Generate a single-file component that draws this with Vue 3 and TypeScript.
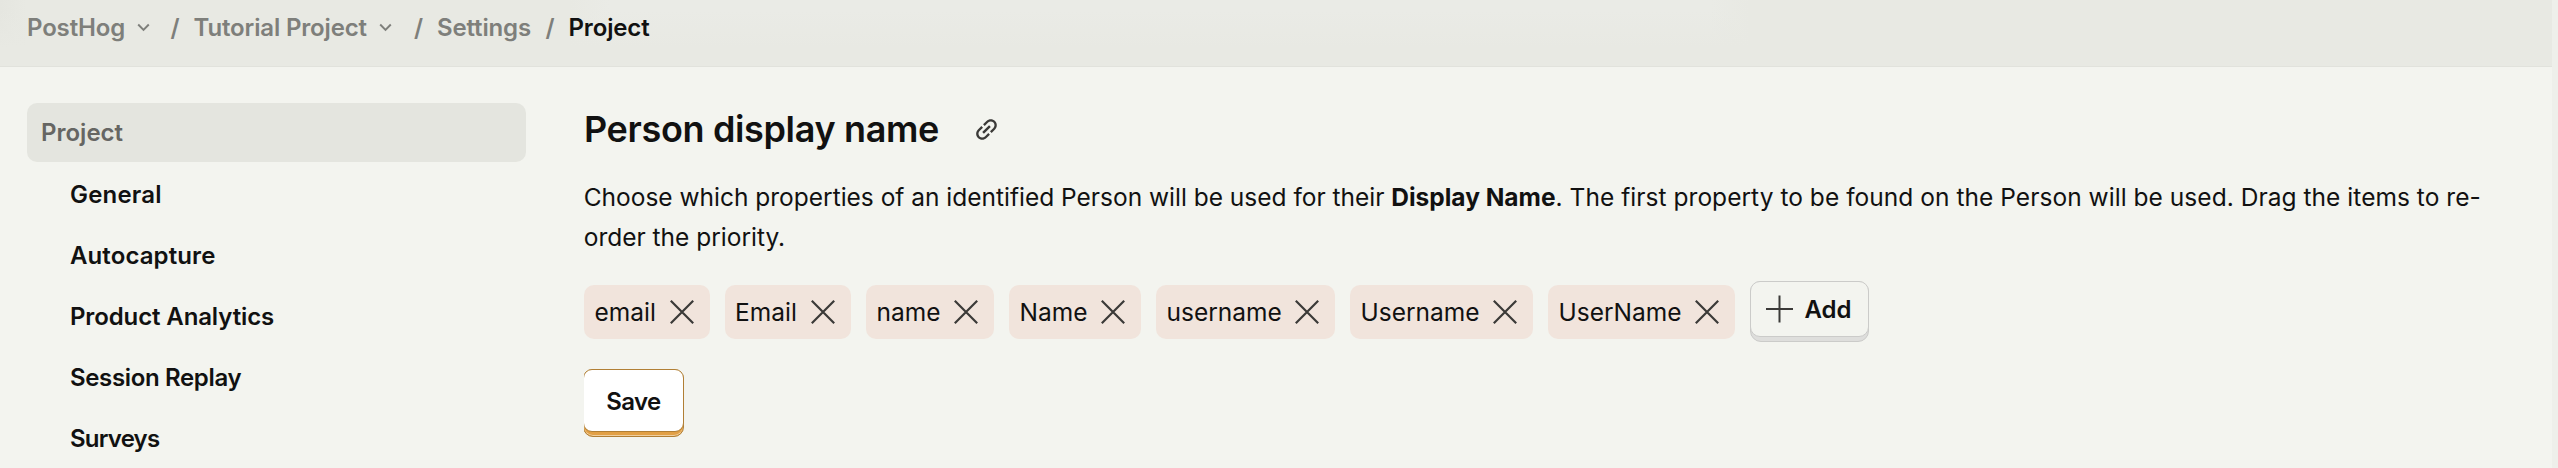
<script setup lang="ts">
interface Crumb { label: string; menu?: boolean; slot: number }
interface NavItem { label: string; tracking: number }
interface Tag { label: string; width: number }

const crumbs: Crumb[] = [
  { label: 'PostHog', menu: true, slot: 143.5 },
  { label: 'Tutorial Project', menu: true, slot: 220.5 },
  { label: 'Settings', slot: 108.5 },
]

const sections: NavItem[] = [
  { label: 'General', tracking: 0.2 },
  { label: 'Autocapture', tracking: 0.1 },
  { label: 'Product Analytics', tracking: -0.12 },
  { label: 'Session Replay', tracking: -0.35 },
  { label: 'Surveys', tracking: -0.8 },
]

const tags: Tag[] = [
  { label: 'email', width: 125.5 },
  { label: 'Email', width: 126.5 },
  { label: 'name', width: 128 },
  { label: 'Name', width: 132 },
  { label: 'username', width: 179 },
  { label: 'Username', width: 183 },
  { label: 'UserName', width: 186.5 },
]
</script>

<template>
  <div class="page">
    <div class="view">
      <header class="topbar">
        <nav class="crumbs">
          <template v-for="c in crumbs" :key="c.label">
            <span class="crumb" :style="{ width: c.slot + 'px' }">
              {{ c.label }}
              <svg v-if="c.menu" class="chevron" width="13" height="9" viewBox="0 0 13 9">
                <path d="M1.2 1.5 6.5 7l5.300-5.500" />
              </svg>
            </span>
            <span class="slash">/</span>
          </template>
          <span class="crumb current">Project</span>
        </nav>
      </header>

      <div class="body">
        <aside class="sidebar">
          <a class="nav-top">Project</a>
          <a
            v-for="s in sections"
            :key="s.label"
            class="nav-item"
            :style="{ letterSpacing: s.tracking + 'px' }"
          >{{ s.label }}</a>
        </aside>

        <main class="content">
          <h2 class="title">
            <span>Person display name</span>
            <svg class="link" width="29" height="29" viewBox="0 0 24 24">
              <path
                transform="rotate(-45 12 12)"
                d="M3.900 12c0-1.710 1.390-3.100 3.100-3.100h4V7H7c-2.760 0-5 2.240-5 5s2.240 5 5 5h4v-1.900H7c-1.710 0-3.100-1.390-3.100-3.100zM8 13h8v-2H8v2zm9-6h-4v1.900h4c1.710 0 3.100 1.390 3.100 3.100s-1.390 3.100-3.100 3.100h-4V17h4c2.760 0 5-2.240 5-5s-2.240-5-5-5z"
              />
            </svg>
          </h2>
          <p class="desc">
            Choose which properties of an identified Person will be used for their
            <strong>Display Name</strong><span class="rest">. The first property to be found on the Person will be used. Drag the items to re-</span><br />order the priority.
          </p>
          <div class="tags">
            <span v-for="t in tags" :key="t.label" class="tag" :style="{ width: t.width + 'px' }">
              {{ t.label }}
              <svg width="24" height="24" viewBox="0 0 24 24">
                <path d="M.8.8l22.400 22.400M23.200.8.8 23.200" />
              </svg>
            </span>
            <button class="add">
              <span class="face">
                <svg width="27" height="28" viewBox="0 0 27 28">
                  <path d="M0 14h27M13.500 .5v27" />
                </svg>
                Add
              </span>
            </button>
          </div>
          <div class="actions">
            <button class="save"><span class="face">Save</span></button>
          </div>
        </main>
      </div>
    </div>
    <div class="gutter"></div>
  </div>
</template>

<style>
body {
  margin: 0;
  overflow: hidden;
  background: #f3f4ef;
}
</style>

<style scoped>
* {
  box-sizing: border-box;
}
.page {
  display: flex;
  width: 2558px;
  height: 468px;
  overflow: hidden;
  background: #f3f4ef;
  color: #111;
  font-family: Inter, 'Liberation Sans', sans-serif;
  font-size: 24px;
}
.view {
  flex: 1;
}
.gutter {
  width: 6px;
  background: #eeefea;
}
.topbar {
  height: 67px;
  border-bottom: 1px solid #e1e2dc;
  background:
    linear-gradient(rgba(232, 233, 227, 0) 10px, #e8e9e3 48px),
    linear-gradient(90deg, #e5e6e0, #e8e9e3 26px, #e8e9e3 570px, #eaebe6 610px, #eaebe6 1710px, #e8e9e3 1750px);
}
.crumbs {
  display: flex;
  height: 55px;
  align-items: center;
  padding-left: 27px;
  font-weight: 600;
  letter-spacing: -0.15px;
  color: #7e7f7b;
}
.crumb {
  display: flex;
  flex: none;
  align-items: center;
  gap: 12px;
  white-space: nowrap;
}
.slash {
  flex: none;
  width: 23px;
  font-weight: 600;
}
.current {
  color: #111;
}
.chevron path {
  fill: none;
  stroke: #7e7f7b;
  stroke-width: 1.9;
}
.body {
  display: flex;
}
.sidebar {
  display: flex;
  flex-direction: column;
  width: 499px;
  margin: 36px 58px 0 27px;
  font-weight: 600;
}
.nav-top {
  height: 59px;
  margin-bottom: 2px;
  padding-left: 14px;
  border-radius: 10px;
  background: #e4e5df;
  line-height: 59px;
  color: #666663;
}
.nav-item {
  height: 61px;
  padding-left: 43px;
  line-height: 61px;
}
.content {
  flex: 1;
}
.title {
  display: flex;
  align-items: center;
  gap: 33px;
  height: 44px;
  margin: 40px 0 0;
  font-size: 36px;
  font-weight: 600;
  letter-spacing: -0.35px;
}
.link {
  fill: #3b3a38;
}
.desc {
  margin: 26px 0 0 -0.3px;
  font-size: 24.5px;
  line-height: 40px;
  letter-spacing: -0.01px;
  white-space: nowrap;
}
.desc strong {
  font-weight: 700;
}
.rest {
  letter-spacing: 0.04px;
}
.tags {
  display: flex;
  gap: 15px;
  align-items: flex-start;
  height: 61px;
  margin-top: 24px;
}
.tag {
  display: flex;
  flex: none;
  align-items: center;
  justify-content: space-between;
  height: 54px;
  margin-top: 4px;
  padding: 0 16px 0 10.5px;
  border-radius: 10px;
  background: #f1e4dc;
  font-size: 24.5px;
}
.tag svg path,
.add svg path {
  fill: none;
  stroke: #3b3a38;
  stroke-width: 2.2;
}
.add svg path {
  stroke-width: 2;
}
button {
  display: flex;
  flex: none;
  align-items: flex-start;
  padding: 0;
  font: inherit;
  font-weight: 600;
  color: #111;
}
.face {
  display: flex;
  flex: none;
  align-items: center;
  border-style: solid;
  border-width: 1px;
}
.add {
  width: 119px;
  height: 61px;
  border: 1px solid #cbcbc9;
  border-radius: 11px;
  background: #dededc;
}
.add .face {
  gap: 12px;
  width: 119px;
  height: 56px;
  margin: -1px;
  padding-left: 15px;
  border-color: #cbcbc9;
  border-radius: 10px;
  background: #f3f4ef;
}
.actions {
  width: 110px;
  margin-top: 27px;
  overflow: hidden;
}
.save {
  width: 101px;
  height: 68px;
  margin-left: -1px;
  border: 1px solid #b17f35;
  border-radius: 10px;
  background: #e2a046;
  box-shadow: inset 0 -1px 0 #f0cf9f;
}
.save .face {
  justify-content: center;
  width: 101px;
  height: 63px;
  margin: -1px;
  padding-top: 2px;
  border-color: #b17f35;
  border-radius: 9px;
  background: #fff;
  letter-spacing: -0.6px;
}
</style>
